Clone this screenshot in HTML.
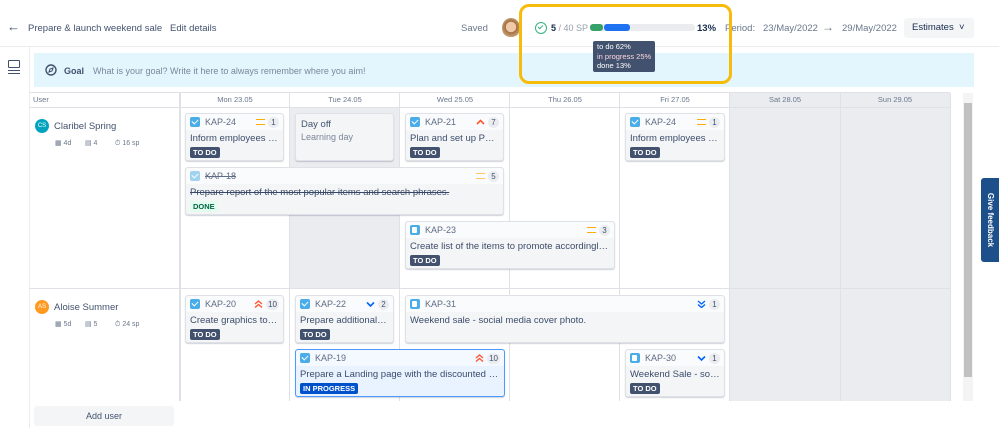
<!DOCTYPE html>
<html><head><meta charset="utf-8"><style>
*{box-sizing:border-box;margin:0;padding:0}
body{width:999px;height:428px;overflow:hidden;background:#fff;font-family:"Liberation Sans",sans-serif;color:#42526e;position:relative;font-size:9px}
.a{position:absolute}
.card{position:absolute;background:#f4f5f7;border:1px solid #dfe1e6;border-radius:3px;box-shadow:0 1px 1px rgba(9,30,66,.2)}
.ch{height:16px;background:#fafbfc;display:flex;align-items:center;padding:0 4px;font-size:9px;color:#5e6c84;border-radius:3px 3px 0 0}
.ck{width:10px;height:10px;background:#4bade8;border-radius:2px;margin-right:5px;position:relative}
.ck:after{content:"";position:absolute;left:3px;top:1px;width:3px;height:5px;border:solid #fff;border-width:0 1.5px 1.5px 0;transform:rotate(45deg)}
.st{width:10px;height:10px;background:#4bade8;border-radius:2px;margin-right:5px;position:relative}
.st:after{content:"";position:absolute;left:2px;top:2px;width:5px;height:6px;background:#fff;border-radius:1px}
.sp{margin-left:auto;display:flex;align-items:center;gap:3px}
.n{background:#ebecf0;border-radius:6px;min-width:11px;height:11px;font-size:8px;text-align:center;line-height:11px;color:#42526e;padding:0 2px}
.t{font-size:9.5px;color:#172b4d;padding:3px 4px 0;white-space:nowrap;overflow:hidden;text-overflow:ellipsis;opacity:.85}
.lz{display:inline-block;margin:3px 4px 0;background:#42526e;color:#fff;font-weight:bold;font-size:7.5px;padding:1px 3px;border-radius:2px}
.eq{width:9px;height:6px;border-top:1.5px solid #ffab00;border-bottom:1.5px solid #ffab00}
.vl{position:absolute;top:93px;height:308px;width:1px;background:#dfe1e6}
.hd{position:absolute;top:93px;height:14px;font-size:7.5px;color:#6b778c;text-align:center;line-height:14px}
</style></head><body>
<div class="a" style="left:7px;top:19px;font-size:13px;color:#42526e">&#8592;</div>
<div class="a" style="left:28px;top:23px;font-size:9.5px;color:#42526e">Prepare &amp; launch weekend sale&nbsp;&nbsp; Edit details</div>
<div class="a" style="left:461px;top:23px;font-size:9.5px;color:#6b778c">Saved</div>
<div class="a" style="left:502px;top:18px;width:18px;height:20px;border-radius:50%;background:radial-gradient(circle at 50% 45%,#f0c9a8 35%,#a0703f 38%,#c8a078 70%,#fff 72%)"></div>
<div class="a" style="left:535px;top:22px;width:12px;height:12px;border:1.5px solid #36b37e;border-radius:50%"></div>
<div class="a" style="left:539px;top:24px;width:3px;height:5px;border:solid #36b37e;border-width:0 1.5px 1.5px 0;transform:rotate(45deg)"></div>
<div class="a" style="left:551px;top:23px;font-size:9px;color:#97a0af"><b style="color:#172b4d">5</b> / 40 SP</div>
<div class="a" style="left:590px;top:24px;width:105px;height:7px;background:#ebecf0;border-radius:3px"></div>
<div class="a" style="left:590px;top:24px;width:13px;height:7px;background:#36a269;border-radius:3px"></div>
<div class="a" style="left:604px;top:24px;width:26px;height:7px;background:#1f72f0;border-radius:3px"></div>
<div class="a" style="left:697px;top:23px;font-size:9.5px;font-weight:bold;color:#172b4d">13%</div>
<div class="a" style="left:725px;top:23px;font-size:9.5px;color:#6b778c">Period:&nbsp;&nbsp; 23/May/2022</div>
<div class="a" style="left:822px;top:20px;font-size:12px;color:#6b778c">&#8594;</div>
<div class="a" style="left:842px;top:23px;font-size:9.5px;color:#6b778c">29/May/2022</div>
<div class="a" style="left:904px;top:18px;width:70px;height:20px;background:#f4f5f7;border-radius:3px;font-size:9.5px;color:#172b4d;line-height:20px;padding-left:8px">Estimates&nbsp;&nbsp;&#709;</div>
<div class="a" style="left:0;top:46px;width:999px;height:1px;background:#ebecf0"></div>
<div class="a" style="left:29px;top:47px;width:1px;height:381px;background:#ebecf0"></div>
<div class="a" style="left:8px;top:60px;width:12px;height:8px;border:1.5px solid #42526e;border-radius:1px"></div>
<div class="a" style="left:8px;top:70px;width:12px;height:4px;border-top:1.3px solid #42526e;border-bottom:1.3px solid #42526e"></div>
<div class="a" style="left:34px;top:53px;width:940px;height:34px;background:#e3f6fd"></div>
<svg class="a" style="left:45px;top:64px" width="12" height="12" viewBox="0 0 12 12"><circle cx="6" cy="6" r="5" fill="none" stroke="#42526e" stroke-width="1.4"/><path d="M4 8 L5 5 L8 4 L7 7 Z" fill="none" stroke="#42526e" stroke-width="1.1"/></svg>
<div class="a" style="left:64px;top:66px;font-size:9px;font-weight:bold;color:#42526e">Goal</div>
<div class="a" style="left:93px;top:66px;font-size:9px;color:#7a869a">What is your goal? Write it here to always remember where you aim!</div>
<div class="a" style="left:290px;top:107px;width:110px;height:181px;background:#ebecf0"></div>
<div class="a" style="left:730px;top:93px;width:220px;height:308px;background:#ebecf0"></div>
<div class="a" style="left:29px;top:92px;width:921px;height:1px;background:#dfe1e6"></div>
<div class="a" style="left:29px;top:107px;width:921px;height:1px;background:#dfe1e6"></div>
<div class="a" style="left:29px;top:288px;width:921px;height:1px;background:#dfe1e6"></div>
<div class="vl" style="left:179px;width:2px"></div><div class="vl" style="left:289px"></div><div class="vl" style="left:399px"></div><div class="vl" style="left:509px"></div><div class="vl" style="left:619px"></div><div class="vl" style="left:729px"></div><div class="vl" style="left:840px"></div><div class="vl" style="left:950px"></div>
<div class="hd" style="left:33px;text-align:left">User</div>
<div class="hd" style="left:180px;width:110px">Mon 23.05</div>
<div class="hd" style="left:290px;width:110px">Tue 24.05</div>
<div class="hd" style="left:400px;width:110px">Wed 25.05</div>
<div class="hd" style="left:510px;width:110px">Thu 26.05</div>
<div class="hd" style="left:620px;width:110px">Fri 27.05</div>
<div class="hd" style="left:730px;width:110px">Sat 28.05</div>
<div class="hd" style="left:840px;width:110px">Sun 29.05</div>
<div class="a" style="left:963px;top:93px;width:10px;height:308px;background:#f4f4f4"></div>
<div class="a" style="left:964px;top:103px;width:8px;height:274px;background:#c1c1c1"></div>
<div class="a" style="left:35px;top:119px;width:14px;height:14px;border-radius:50%;background:#00a3bf;color:#fff;font-size:6px;text-align:center;line-height:14px">CS</div>
<div class="a" style="left:54px;top:121px;font-size:9.5px;color:#42526e">Claribel Spring</div>
<div class="a" style="left:55px;top:139px;font-size:7px;color:#6b778c">&#9638; 4d&nbsp;&nbsp;&nbsp;&nbsp;&nbsp;&nbsp;&nbsp;&#9636; 4&nbsp;&nbsp;&nbsp;&nbsp;&nbsp;&nbsp;&nbsp;&nbsp;&nbsp;&#9201; 16 sp</div>
<div class="a" style="left:35px;top:300px;width:14px;height:14px;border-radius:50%;background:#ff991f;color:#fff;font-size:6px;text-align:center;line-height:14px">AS</div>
<div class="a" style="left:54px;top:302px;font-size:9.5px;color:#42526e">Aloise Summer</div>
<div class="a" style="left:55px;top:320px;font-size:7px;color:#6b778c">&#9638; 5d&nbsp;&nbsp;&nbsp;&nbsp;&nbsp;&nbsp;&nbsp;&#9636; 5&nbsp;&nbsp;&nbsp;&nbsp;&nbsp;&nbsp;&nbsp;&nbsp;&nbsp;&#9201; 24 sp</div>
<div class="a" style="left:34px;top:406px;width:140px;height:20px;background:#f4f5f7;border-radius:3px;text-align:center;line-height:20px;font-size:9px;color:#42526e">Add user</div>
<div class="card" style="left:185px;top:113px;width:99px;height:48px"><div class="ch"><div class="ck"></div>KAP-24<div class="sp"><div class="eq"></div><span class="n">1</span></div></div><div class="t">Inform employees ab...</div><span class="lz">TO DO</span></div>
<div class="card" style="left:295px;top:113px;width:99px;height:48px;background:#f4f5f7;padding:5px 5px"><div style="font-size:9.5px;color:#42526e">Day off</div><div style="font-size:9px;color:#7a869a;margin-top:2px">Learning day</div></div>
<div class="card" style="left:405px;top:113px;width:99px;height:48px"><div class="ch"><div class="ck"></div>KAP-21<div class="sp"><svg width="9" height="6" viewBox="0 0 9 6"><path d="M1 5 L4.5 1.5 L8 5" fill="none" stroke="#ff5630" stroke-width="1.6"/></svg><span class="n">7</span></div></div><div class="t">Plan and set up PPC c...</div><span class="lz">TO DO</span></div>
<div class="card" style="left:625px;top:113px;width:100px;height:48px"><div class="ch"><div class="ck"></div>KAP-24<div class="sp"><div class="eq"></div><span class="n">1</span></div></div><div class="t">Inform employees ab...</div><span class="lz">TO DO</span></div>
<div class="card" style="left:185px;top:167px;width:319px;height:48px"><div class="ch"><div class="ck" style="opacity:.5"></div><s>KAP-18</s><div class="sp"><div class="eq" style="opacity:.6"></div><span class="n">5</span></div></div><div class="t"><s>Prepare report of the most popular items and search phrases.</s></div><span class="lz" style="background:#e3fcef;color:#006644">DONE</span></div>
<div class="card" style="left:405px;top:221px;width:210px;height:48px"><div class="ch"><div class="st"></div>KAP-23<div class="sp"><div class="eq"></div><span class="n">3</span></div></div><div class="t">Create list of the items to promote accordingly to t...</div><span class="lz">TO DO</span></div>
<div class="card" style="left:185px;top:295px;width:99px;height:48px"><div class="ch"><div class="ck"></div>KAP-20<div class="sp"><svg width="9" height="8" viewBox="0 0 9 8"><path d="M1 4 L4.5 1 L8 4 M1 7.5 L4.5 4.5 L8 7.5" fill="none" stroke="#ff5630" stroke-width="1.4"/></svg><span class="n">10</span></div></div><div class="t">Create graphics to pr...</div><span class="lz">TO DO</span></div>
<div class="card" style="left:295px;top:295px;width:99px;height:48px"><div class="ch"><div class="ck"></div>KAP-22<div class="sp"><svg width="9" height="6" viewBox="0 0 9 6"><path d="M1 1.5 L4.5 5 L8 1.5" fill="none" stroke="#0065ff" stroke-width="1.6"/></svg><span class="n">2</span></div></div><div class="t">Prepare additional pr...</div><span class="lz">TO DO</span></div>
<div class="card" style="left:405px;top:295px;width:320px;height:48px"><div class="ch"><div class="st"></div>KAP-31<div class="sp"><svg width="9" height="8" viewBox="0 0 9 8"><path d="M1 1 L4.5 4 L8 1 M1 4.5 L4.5 7.5 L8 4.5" fill="none" stroke="#0065ff" stroke-width="1.4"/></svg><span class="n">1</span></div></div><div class="t">Weekend sale - social media cover photo.</div></div>
<div class="card" style="left:295px;top:349px;width:210px;height:48px;background:#e9f2ff;border-color:#4c9aff"><div class="ch" style="background:#f4f8ff"><div class="ck"></div>KAP-19<div class="sp"><svg width="9" height="8" viewBox="0 0 9 8"><path d="M1 4 L4.5 1 L8 4 M1 7.5 L4.5 4.5 L8 7.5" fill="none" stroke="#ff5630" stroke-width="1.4"/></svg><span class="n">10</span></div></div><div class="t">Prepare a Landing page with the discounted prod...</div><span class="lz" style="background:#0052cc">IN PROGRESS</span></div>
<div class="card" style="left:625px;top:349px;width:100px;height:48px"><div class="ch"><div class="st"></div>KAP-30<div class="sp"><svg width="9" height="6" viewBox="0 0 9 6"><path d="M1 1.5 L4.5 5 L8 1.5" fill="none" stroke="#0065ff" stroke-width="1.6"/></svg><span class="n">1</span></div></div><div class="t">Weekend Sale - social...</div><span class="lz">TO DO</span></div>
<div class="a" style="left:593px;top:41px;width:62px;height:31px;background:#42526e;border-radius:2px;color:#fff;font-size:7.5px;line-height:9.5px;padding:1px 4px;white-space:nowrap">to do 62%<br><span style="color:#ffd6e0">in progress 25%</span><br>done 13%</div>
<div class="a" style="left:519px;top:4px;width:213px;height:80px;border:3px solid #f7bb0b;border-radius:10px"></div>
<div class="a" style="left:981px;top:178px;width:18px;height:84px;background:#1d4f8a;border-radius:3px 0 0 3px"></div>
<div class="a" style="left:982px;top:178px;width:84px;height:16px;transform-origin:0 0;transform:translate(16px,0) rotate(90deg);color:#fff;font-size:8px;font-weight:bold;text-align:center;line-height:16px">Give feedback</div>
</body></html>
